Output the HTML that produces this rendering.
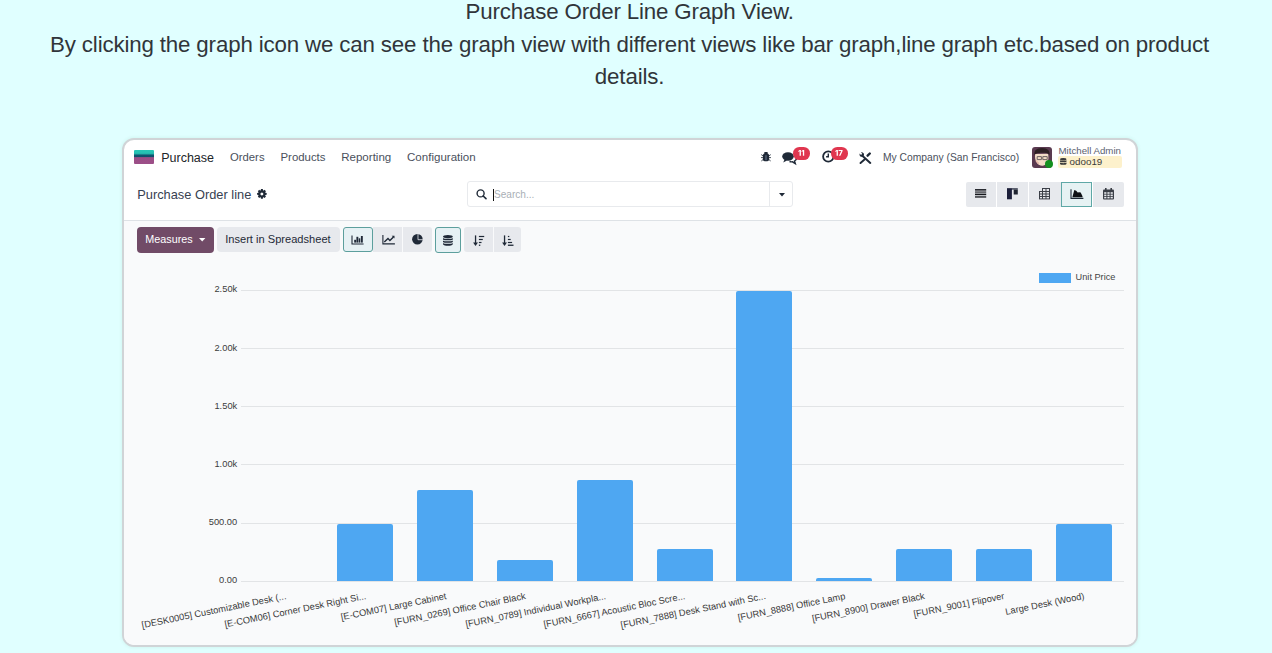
<!DOCTYPE html>
<html><head><meta charset="utf-8"><style>
html,body{margin:0;padding:0;}
body{width:1272px;height:653px;overflow:hidden;background:#e0ffff;position:relative;font-family:"Liberation Sans",sans-serif;}
.t{position:absolute;white-space:nowrap;}
.r{position:absolute;box-sizing:border-box;}
svg.r{overflow:visible}
.hd{position:absolute;left:29.6px;width:1200px;text-align:center;font-size:22.3px;line-height:32.5px;letter-spacing:-0.15px;color:#30353a;}
.card{position:absolute;left:122px;top:138px;width:1016px;height:509px;box-sizing:border-box;border:2px solid #d0d4d7;border-radius:12px;background:#fff;overflow:hidden;box-shadow:0 0 3px 1px rgba(40,140,90,0.07);}
.chartbg{position:absolute;left:0;right:0;top:80px;bottom:0;background:#f9fafb;border-top:1px solid #dee2e6;}
.xl{position:absolute;white-space:nowrap;font-size:9.3px;line-height:9.3px;color:#383838;transform:rotate(-11.5deg);transform-origin:100% 0;}
</style></head><body>
<div class="hd" style="top:-3.93px">Purchase Order Line Graph View.<br>By clicking the graph icon we can see the graph view with different views like bar graph,line graph etc.based on product details.</div>
<div class="card"><div class="chartbg"></div></div>
<div class="r" style="left:134.00px;top:150.00px;width:20.00px;height:14.00px;border-radius:1px;background:linear-gradient(#27c6b6 0,#25c0b2 24%,#0e5570 38%,#0d4f6a 50%,#9b4e86 54%,#9c4f88 100%)"></div>
<div class="t" style="left:161.20px;top:152.02px;font-size:12.5px;line-height:12.5px;color:#212529;font-weight:400;">Purchase</div>
<div class="t" style="left:230.00px;top:152.03px;font-size:11.3px;line-height:11.3px;color:#4a505c;font-weight:400;">Orders</div>
<div class="t" style="left:280.50px;top:151.95px;font-size:11.4px;line-height:11.4px;color:#4a505c;font-weight:400;">Products</div>
<div class="t" style="left:341.20px;top:151.82px;font-size:11.55px;line-height:11.55px;color:#4a505c;font-weight:400;">Reporting</div>
<div class="t" style="left:407.00px;top:151.82px;font-size:11.55px;line-height:11.55px;color:#4a505c;font-weight:400;">Configuration</div>
<svg class="r" style="left:761.00px;top:152.30px" width="10" height="9.6" viewBox="0 0 10 9.6"><g fill="#1f2937"><rect x="3.1" y="0" width="3.8" height="2.2" rx="1.1"/><rect x="1.9" y="1.6" width="6.2" height="7.6" rx="1.8"/></g><rect x="4.5" y="3.2" width="1" height="5" fill="#6a7890"/><path d="M0.2 2.6l1.8 1.2M9.8 2.6l-1.8 1.2M0 5.6h2M10 5.6h-2M0.3 9l1.8-1.4M9.7 9l-1.8-1.4" stroke="#1f2937" stroke-width="0.8"/></svg>
<svg class="r" style="left:782.00px;top:151.00px" width="15" height="13" viewBox="0 0 15 13"><g fill="#1f2937"><ellipse cx="6" cy="5.5" rx="5.8" ry="4.2"/><path d="M2.5 8.5L1.2 11.5 5 9.5z"/><path d="M7.5 10.5c1 .4 2 .5 3 .3l2.8 1.8-.8-2.6c1.4-.8 2.3-2 2.3-3.3 0-.7-.2-1.3-.6-1.9" fill="none" stroke="#1f2937" stroke-width="1.4"/></g></svg>
<div class="r" style="left:792.80px;top:147.00px;width:17.40px;height:12.60px;border-radius:6.3px;background:#e0364f"></div>
<svg class="r" style="left:797.50px;top:150.40px" width="7.2" height="5.8" viewBox="0 0 7.2 5.8"><g fill="#fff"><path d="M1.6 0h1.3v5.8H1.6V1.3L0.3 2V0.9z"/><path d="M4.9 0h1.3v5.8H4.9V1.3L3.6 2V0.9z"/></g></svg>
<svg class="r" style="left:822.00px;top:150.10px" width="13" height="13" viewBox="0 0 13 13"><circle cx="6.3" cy="6.5" r="5.2" fill="none" stroke="#1f2937" stroke-width="1.8"/><path d="M6.3 3.5v3.2h-2.2" fill="none" stroke="#1f2937" stroke-width="1.4"/></svg>
<div class="r" style="left:831.20px;top:147.00px;width:16.80px;height:12.60px;border-radius:6.3px;background:#e0364f"></div>
<svg class="r" style="left:835.40px;top:150.40px" width="7.6" height="5.8" viewBox="0 0 7.6 5.8"><g fill="#fff"><path d="M1.6 0h1.3v5.8H1.6V1.3L0.3 2V0.9z"/><path d="M3.6 0h4v1.1L5.4 5.8H4L6.2 1.1H3.6z"/></g></svg>
<svg class="r" style="left:859.00px;top:151.50px" width="13" height="12" viewBox="0 0 13 12"><g stroke="#1f2937" stroke-linecap="round" fill="none"><path d="M3.6 4L11.3 10.9" stroke-width="2"/><path d="M10.8 1.5L8.6 3.7" stroke-width="2.4"/><path d="M5.8 7.2L1.5 11" stroke-width="1.9"/></g><path d="M0.6 1.6L2 3 3.3 1.7 1.9 0.3C3.4-.3 5 .8 5 2.4c0 .5-.1.9-.4 1.3L4 4.4C3.3 4.9 2 5 1.2 4.3.6 3.7.4 2.6.6 1.6z" fill="#1f2937"/></svg>
<div class="t" style="left:883.00px;top:153.28px;font-size:10.3px;line-height:10.3px;color:#4a505c;font-weight:400;">My Company (San Francisco)</div>
<svg class="r" style="left:1032.00px;top:147.00px" width="20" height="21" viewBox="0 0 20 21"><rect width="20" height="21" rx="3" fill="#5a3a50"/><path d="M3.2 7c-.6 3 0 6.5 1.8 9 1.6 2.2 4 3.2 6.5 2.6 2.8-.7 4.6-3.6 4.9-7.2.1-1.6 0-3.2-.3-4.6z" fill="#f2dcc6"/><path d="M2.4 8.2C1.8 4 4.2 1 10 1s8.2 3 7.6 7.2c-1.2-1.6-3-2.4-7.6-2.4S3.6 6.6 2.4 8.2z" fill="#2e2024"/><path d="M5.2 9.6h4.2v3h-4.2zM10.8 9.6h4.4v3h-4.4z" fill="none" stroke="#6d6260" stroke-width="1"/><path d="M4 13.5c1 1 1.5 2.5 3 3" stroke="#e8b9a8" stroke-width="1.4" fill="none"/></svg>
<div class="r" style="left:1045.00px;top:160.00px;width:8.00px;height:8.00px;border-radius:50%;background:#13901f"></div>
<div class="t" style="left:1058.50px;top:146.09px;font-size:9.7px;line-height:9.7px;color:#5b6270;font-weight:400;">Mitchell Admin</div>
<div class="r" style="left:1057.70px;top:155.60px;width:64.20px;height:12.70px;border-radius:2px;background:#fdf1cc"></div>
<svg class="r" style="left:1060.00px;top:158.40px" width="6.5" height="7.2" viewBox="0 0 6.5 7.2"><g fill="#3a3a3a"><ellipse cx="3.25" cy="1.3" rx="3.2" ry="1.3"/><path d="M0 2.2c1 .8 5.5.8 6.5 0v1.5c-1 .8-5.5.8-6.5 0zM0 4.6c1 .8 5.5.8 6.5 0v1.3c-1 1.2-5.5 1.2-6.5 0z"/></g></svg>
<div class="t" style="left:1069.60px;top:157.10px;font-size:9.8px;line-height:9.8px;color:#3a3a3a;font-weight:400;">odoo19</div>
<div class="t" style="left:137.20px;top:189.14px;font-size:12.83px;line-height:12.83px;color:#374151;font-weight:400;">Purchase Order line</div>
<svg class="r" style="left:257.20px;top:189.20px" width="9.8" height="9.8" viewBox="0 0 9.8 9.8"><circle cx="4.9" cy="4.9" r="3.6" fill="#1f2937"/><path fill="#1f2937" d="M8.01 3.80 L9.70 3.93 L9.70 5.87 L8.01 6.00 L7.88 6.32 L8.98 7.61 L7.61 8.98 L6.32 7.88 L6.00 8.01 L5.87 9.70 L3.93 9.70 L3.80 8.01 L3.48 7.88 L2.19 8.98 L0.82 7.61 L1.92 6.32 L1.79 6.00 L0.10 5.87 L0.10 3.93 L1.79 3.80 L1.92 3.48 L0.82 2.19 L2.19 0.82 L3.48 1.92 L3.80 1.79 L3.93 0.10 L5.87 0.10 L6.00 1.79 L6.32 1.92 L7.61 0.82 L8.98 2.19 L7.88 3.48z"/><circle cx="4.9" cy="4.9" r="1.5" fill="#fff"/></svg>
<div class="r" style="left:467.00px;top:181.40px;width:325.60px;height:25.80px;border:1px solid #e8eaed;border-radius:3px;background:#fff"></div>
<div class="r" style="left:769.00px;top:182.00px;width:1.00px;height:24.80px;background:#e8eaed"></div>
<svg class="r" style="left:475.50px;top:189.30px" width="11.5" height="10" viewBox="0 0 11.5 10"><circle cx="4.6" cy="4.4" r="3.5" fill="none" stroke="#1f2937" stroke-width="1.4"/><path d="M7.2 7l2.8 2.7" stroke="#1f2937" stroke-width="1.6" stroke-linecap="round"/></svg>
<div class="r" style="left:493.00px;top:188.80px;width:1.00px;height:12.00px;background:#111"></div>
<div class="t" style="left:494.00px;top:189.65px;font-size:10.1px;line-height:10.1px;color:#a9afb6;font-weight:400;">Search...</div>
<svg class="r" style="left:778.50px;top:192.50px" width="6" height="3.5" viewBox="0 0 6 3.5"><path d="M0 0h6L3 3.5z" fill="#1f2937"/></svg>
<div class="r" style="left:965.60px;top:182.30px;width:30.80px;height:24.40px;background:#e7e9ed;border-radius:2px 0 0 2px"></div>
<div class="r" style="left:997.40px;top:182.30px;width:30.90px;height:24.40px;background:#e7e9ed"></div>
<div class="r" style="left:1029.30px;top:182.30px;width:31.30px;height:24.40px;background:#e7e9ed"></div>
<div class="r" style="left:1061.00px;top:181.50px;width:30.90px;height:25.70px;background:#e6f2f3;border:1px solid #5ea8a6"></div>
<div class="r" style="left:1092.70px;top:182.30px;width:31.00px;height:24.40px;background:#e7e9ed;border-radius:0 2px 2px 0"></div>
<svg class="r" style="left:975.00px;top:189.20px" width="11" height="9" viewBox="0 0 11 9"><g fill="#15171c"><rect y="0.1" width="11.2" height="1.5"/><rect y="2.5" width="11.2" height="1.1"/><rect y="4.6" width="11.2" height="1.6"/><rect y="7.3" width="11.2" height="1.3"/></g></svg>
<svg class="r" style="left:1007.00px;top:188.30px" width="11" height="11.3" viewBox="0 0 11 11.3"><rect x="0" y="0" width="10.8" height="1.8" fill="#5d6170"/><rect x="0" y="0.5" width="4.9" height="10.8" fill="#1c1f3a"/><rect x="6.7" y="1.6" width="4.1" height="4.9" fill="#1f2330"/></svg>
<svg class="r" style="left:1039.00px;top:188.40px" width="11" height="11.4" viewBox="0 0 11 11.4"><g fill="none" stroke="#3b3f47" stroke-width="1"><rect x="3.5" y="0.5" width="7" height="3"/><rect x="0.5" y="3.5" width="10" height="7.4"/><path d="M0.5 6h10M0.5 8.5h10M3.5 3.5v7.4M7 0.5v10.4"/></g></svg>
<svg class="r" style="left:1069.50px;top:189.00px" width="14" height="10.5" viewBox="0 0 14 10.5"><path d="M1.0 0.2V9.4H13.4" fill="none" stroke="#1f2937" stroke-width="1.1"/><path d="M2.5 8.3V7.7L4.3 1.0 6.2 1.7 7.7 3.6 9.2 3.2 10.7 3.6 12.5 7.3V8.3z" fill="#0f1115"/></svg>
<svg class="r" style="left:1102.80px;top:188.40px" width="11" height="11.4" viewBox="0 0 11 11.4"><g fill="#3b3f47"><rect x="0" y="1.5" width="11" height="9.9" rx="1"/><rect x="2" y="0" width="1.6" height="3" /><rect x="7.4" y="0" width="1.6" height="3"/></g><g fill="#e7e9ed"><rect x="1.2" y="4.2" width="2.2" height="1.6"/><rect x="4.4" y="4.2" width="2.2" height="1.6"/><rect x="7.6" y="4.2" width="2.2" height="1.6"/><rect x="1.2" y="6.6" width="2.2" height="1.6"/><rect x="4.4" y="6.6" width="2.2" height="1.6"/><rect x="7.6" y="6.6" width="2.2" height="1.6"/><rect x="1.2" y="9" width="2.2" height="1.4"/><rect x="4.4" y="9" width="2.2" height="1.4"/><rect x="7.6" y="9" width="2.2" height="1.4"/></g></svg>
<div class="r" style="left:136.90px;top:227.10px;width:77.00px;height:25.50px;background:#714b67;border-radius:4px"></div>
<div class="t" style="left:145.30px;top:233.86px;font-size:10.8px;line-height:10.8px;color:#fff;font-weight:400;">Measures</div>
<svg class="r" style="left:199.00px;top:237.80px" width="6.4" height="3.6" viewBox="0 0 6.4 3.6"><path d="M0 0h6.4L3.2 3.6z" fill="#fff"/></svg>
<div class="r" style="left:217.30px;top:227.20px;width:122.80px;height:25.20px;background:#e7e9ed;border-radius:4px"></div>
<div class="t" style="left:225.20px;top:233.60px;font-size:11.1px;line-height:11.1px;color:#1f2937;font-weight:400;">Insert in Spreadsheet</div>
<div class="r" style="left:343.30px;top:227.30px;width:29.30px;height:25.20px;background:#e6f1f4;border:1px solid #5c9f9d;border-radius:3px"></div>
<div class="r" style="left:372.70px;top:227.30px;width:29.40px;height:25.20px;background:#e7e9ed;border-radius:0"></div>
<div class="r" style="left:403.40px;top:227.30px;width:28.60px;height:25.20px;background:#e7e9ed;border-radius:0 3px 3px 0"></div>
<div class="r" style="left:435.10px;top:227.10px;width:25.90px;height:25.70px;background:#e6f1f4;border:1px solid #5c9f9d;border-radius:3px"></div>
<div class="r" style="left:464.20px;top:227.30px;width:28.90px;height:25.20px;background:#e7e9ed;border-radius:3px 0 0 3px"></div>
<div class="r" style="left:493.80px;top:227.30px;width:27.30px;height:25.20px;background:#e7e9ed;border-radius:0 3px 3px 0"></div>
<svg class="r" style="left:351.00px;top:235.30px" width="13" height="9.6" viewBox="0 0 13 9.6"><path d="M1 0.6v8.4h11.6" fill="none" stroke="#1f2937" stroke-width="1.1"/><g fill="#1f2937"><rect x="3.2" y="4.8" width="1.9" height="2.8"/><rect x="5.4" y="1.8" width="1.9" height="5.8"/><rect x="7.7" y="3.3" width="1.6" height="4.3"/><rect x="9.9" y="1.0" width="1.9" height="6.6"/></g></svg>
<svg class="r" style="left:381.80px;top:235.30px" width="13" height="9.6" viewBox="0 0 13 9.6"><path d="M0.9 0v8.9h12" fill="none" stroke="#1f2937" stroke-width="1.1"/><path d="M2.3 7.1L6 3.6 7.9 5.5 11.5 1.9" fill="none" stroke="#1f2937" stroke-width="1.4"/><path d="M9.7 0.7h2.8v2.8z" fill="#1f2937"/></svg>
<svg class="r" style="left:412.00px;top:234.40px" width="11" height="10.6" viewBox="0 0 11 10.6"><circle cx="5.4" cy="5.3" r="5.3" fill="#1f2937"/><path d="M6 -0.5V5.7H11.5" fill="none" stroke="#e7e9ed" stroke-width="0.8"/></svg>
<svg class="r" style="left:443.30px;top:234.80px" width="9.8" height="10.9" viewBox="0 0 9.8 10.9"><g fill="#1f2937"><ellipse cx="4.9" cy="1.6" rx="4.9" ry="1.6"/><path d="M0 2.9c1.3 1.2 8.5 1.2 9.8 0v1.5c-1.3 1.2-8.5 1.2-9.8 0zM0 5.4c1.3 1.2 8.5 1.2 9.8 0v1.5c-1.3 1.2-8.5 1.2-9.8 0zM0 7.9c1.3 1.2 8.5 1.2 9.8 0v1.4c-1.3 2-8.5 2-9.8 0z"/></g></svg>
<svg class="r" style="left:473.00px;top:234.60px" width="11.5" height="11.4" viewBox="0 0 11.5 11.4"><g fill="#1f2937"><rect x="1.9" y="0.4" width="1.3" height="8"/><path d="M0.1 7.6h4.9L2.55 11z"/><rect x="5.9" y="0.9" width="5.3" height="1.2"/><rect x="5.9" y="3.9" width="3.9" height="1.2"/><rect x="5.9" y="6.9" width="2.6" height="1.2"/><rect x="5.9" y="9.6" width="1.4" height="1.3"/></g></svg>
<svg class="r" style="left:502.20px;top:234.60px" width="11.6" height="11.4" viewBox="0 0 11.6 11.4"><g fill="#1f2937"><rect x="1.9" y="0.4" width="1.3" height="8"/><path d="M0.1 7.6h4.9L2.55 11z"/><rect x="5.9" y="0.9" width="1.4" height="1.2"/><rect x="5.9" y="3.9" width="2.8" height="1.2"/><rect x="5.9" y="6.9" width="4.2" height="1.2"/><rect x="5.9" y="9.6" width="5.6" height="1.3"/></g></svg>
<div class="r" style="left:240.50px;top:289.70px;width:883.50px;height:1.00px;background:#e2e4e6"></div>
<div class="r" style="left:240.50px;top:347.90px;width:883.50px;height:1.00px;background:#e2e4e6"></div>
<div class="r" style="left:240.50px;top:406.10px;width:883.50px;height:1.00px;background:#e2e4e6"></div>
<div class="r" style="left:240.50px;top:464.30px;width:883.50px;height:1.00px;background:#e2e4e6"></div>
<div class="r" style="left:240.50px;top:522.50px;width:883.50px;height:1.00px;background:#e2e4e6"></div>
<div class="r" style="left:240.50px;top:580.70px;width:883.50px;height:1.00px;background:#e2e4e6"></div>
<div class="t" style="right:1034.80px;top:285.43px;font-size:9.3px;line-height:9.3px;color:#3c3c3c">2.50k</div>
<div class="t" style="right:1034.80px;top:343.63px;font-size:9.3px;line-height:9.3px;color:#3c3c3c">2.00k</div>
<div class="t" style="right:1034.80px;top:401.83px;font-size:9.3px;line-height:9.3px;color:#3c3c3c">1.50k</div>
<div class="t" style="right:1034.80px;top:460.03px;font-size:9.3px;line-height:9.3px;color:#3c3c3c">1.00k</div>
<div class="t" style="right:1034.80px;top:518.23px;font-size:9.3px;line-height:9.3px;color:#3c3c3c">500.00</div>
<div class="t" style="right:1034.80px;top:576.43px;font-size:9.3px;line-height:9.3px;color:#3c3c3c">0.00</div>
<div class="r" style="left:337.49px;top:523.80px;width:56.00px;height:57.40px;background:#4ea7f2;border-radius:2px 2px 0 0"></div>
<div class="r" style="left:417.28px;top:489.90px;width:56.00px;height:91.30px;background:#4ea7f2;border-radius:2px 2px 0 0"></div>
<div class="r" style="left:497.07px;top:560.00px;width:56.00px;height:21.20px;background:#4ea7f2;border-radius:2px 2px 0 0"></div>
<div class="r" style="left:576.86px;top:480.20px;width:56.00px;height:101.00px;background:#4ea7f2;border-radius:2px 2px 0 0"></div>
<div class="r" style="left:656.65px;top:548.90px;width:56.00px;height:32.30px;background:#4ea7f2;border-radius:2px 2px 0 0"></div>
<div class="r" style="left:736.44px;top:290.70px;width:56.00px;height:290.50px;background:#4ea7f2;border-radius:2px 2px 0 0"></div>
<div class="r" style="left:816.23px;top:577.50px;width:56.00px;height:3.70px;background:#4ea7f2;border-radius:2px 2px 0 0"></div>
<div class="r" style="left:896.02px;top:549.40px;width:56.00px;height:31.80px;background:#4ea7f2;border-radius:2px 2px 0 0"></div>
<div class="r" style="left:975.81px;top:549.00px;width:56.00px;height:32.20px;background:#4ea7f2;border-radius:2px 2px 0 0"></div>
<div class="r" style="left:1055.60px;top:523.50px;width:56.00px;height:57.70px;background:#4ea7f2;border-radius:2px 2px 0 0"></div>
<div class="r" style="left:1039.40px;top:272.60px;width:32.00px;height:10.20px;background:#4ea7f2"></div>
<div class="t" style="left:1075.60px;top:273.21px;font-size:9.2px;line-height:9.2px;color:#444;font-weight:400;">Unit Price</div>
<div class="xl" style="right:986.30px;top:592.00px">[DESK0005] Customizable Desk (...</div>
<div class="xl" style="right:906.51px;top:592.00px">[E-COM06] Corner Desk Right Si...</div>
<div class="xl" style="right:826.72px;top:592.00px">[E-COM07] Large Cabinet</div>
<div class="xl" style="right:746.93px;top:592.00px">[FURN_0269] Office Chair Black</div>
<div class="xl" style="right:667.14px;top:592.00px">[FURN_0789] Individual Workpla...</div>
<div class="xl" style="right:587.35px;top:592.00px">[FURN_6667] Acoustic Bloc Scre...</div>
<div class="xl" style="right:507.56px;top:592.00px">[FURN_7888] Desk Stand with Sc...</div>
<div class="xl" style="right:427.77px;top:592.00px">[FURN_8888] Office Lamp</div>
<div class="xl" style="right:347.98px;top:592.00px">[FURN_8900] Drawer Black</div>
<div class="xl" style="right:268.19px;top:592.00px">[FURN_9001] Flipover</div>
<div class="xl" style="right:188.40px;top:592.00px">Large Desk (Wood)</div>
</body></html>
